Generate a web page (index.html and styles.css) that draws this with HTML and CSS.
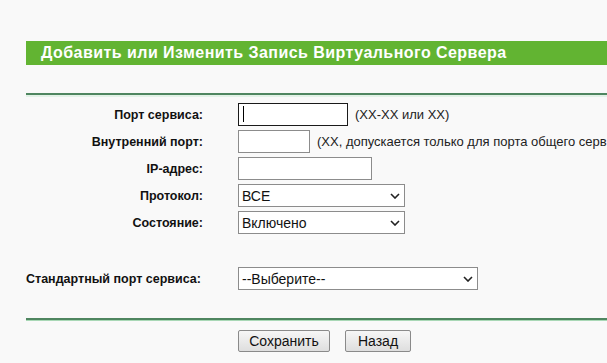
FILE: index.html
```html
<!DOCTYPE html>
<html lang="ru">
<head>
    <meta charset="UTF-8">
    <meta name="viewport" content="width=device-width, initial-scale=1.0">
    <title>Виртуальные серверы</title>
    <link rel="stylesheet" href="styles.css">
</head>
<body>
    <div class="page">
        <div class="title">Добавить или Изменить Запись Виртуального Сервера</div>
        <div class="rule"></div>

        <form class="form-grid">
            <label class="label" for="svcPort">Порт сервиса:</label>
            <div class="field">
                <span class="focus-wrap"><input type="text" id="svcPort" class="text w110 focused"></span>
                <span class="hint">(XX-XX или XX)</span>
            </div>

            <label class="label" for="inPort">Внутренний порт:</label>
            <div class="field">
                <input type="text" id="inPort" class="text w72">
                <span class="hint">(XX, допускается только для порта общего сервиса)</span>
            </div>

            <label class="label" for="ipAddr">IP-адрес:</label>
            <div class="field">
                <input type="text" id="ipAddr" class="text w134">
            </div>

            <label class="label" for="proto">Протокол:</label>
            <div class="field">
                <span class="select-wrap w167">
                    <select id="proto" class="select">
                        <option>ВСЕ</option>
                        <option>TCP</option>
                        <option>UDP</option>
                    </select>
                    <svg class="chevron" width="10" height="6" viewBox="0 0 10 6"><path d="M1 1 L5 5 L9 1" fill="none" stroke="#222" stroke-width="1.6"/></svg>
                </span>
            </div>

            <label class="label" for="state">Состояние:</label>
            <div class="field">
                <span class="select-wrap w167">
                    <select id="state" class="select">
                        <option>Включено</option>
                        <option>Выключено</option>
                    </select>
                    <svg class="chevron" width="10" height="6" viewBox="0 0 10 6"><path d="M1 1 L5 5 L9 1" fill="none" stroke="#222" stroke-width="1.6"/></svg>
                </span>
            </div>

            <label class="label label-left std" for="stdPort">Стандартный порт сервиса:</label>
            <div class="field std">
                <span class="select-wrap w240">
                    <select id="stdPort" class="select">
                        <option>--Выберите--</option>
                        <option>DNS</option>
                        <option>FTP</option>
                        <option>HTTP</option>
                    </select>
                    <svg class="chevron" width="10" height="6" viewBox="0 0 10 6"><path d="M1 1 L5 5 L9 1" fill="none" stroke="#222" stroke-width="1.6"/></svg>
                </span>
            </div>
        </form>

        <div class="rule rule-bottom"></div>

        <div class="buttons">
            <button type="button" class="btn w92">Сохранить</button>
            <button type="button" class="btn w66">Назад</button>
        </div>
    </div>
</body>
</html>
```

FILE: styles.css
```css
body {
    margin: 0;
    background-color: #f9f9f9;
    font-family: "Liberation Sans", Arial, sans-serif;
    color: #111;
    overflow: hidden;
}
.page {
    padding: 41px 0 0 26px;
}
.title {
    height: 24px;
    line-height: 24px;
    background-color: #62b432;
    color: #fff;
    font-size: 16px;
    font-weight: bold;
    letter-spacing: 0.45px;
    padding-left: 15px;
    white-space: nowrap;
}
.rule {
    margin-top: 28px;
    height: 2px;
    background-color: #4f8660;
    border-bottom: 2px solid #e3f2e7;
}
.rule-bottom {
    margin-top: 28px;
    background-color: #4f8660;
    border-bottom: 1px solid #a9d8b6;
}
.form-grid {
    display: grid;
    grid-template-columns: 177px 1fr;
    column-gap: 35px;
    row-gap: 4px;
    margin-top: 6px;
    align-items: center;
}
.label {
    text-align: right;
    font-size: 12.5px;
    font-weight: bold;
    white-space: nowrap;
}
.label-left {
    text-align: left;
}
.std {
    margin-top: 29px;
}
.field {
    display: flex;
    align-items: center;
    gap: 7px;
    white-space: nowrap;
    height: 23px;
}
.hint {
    font-size: 13px;
    color: #222;
}
.text {
    box-sizing: border-box;
    height: 23px;
    border: 1px solid #8c8c8c;
    background: #fff;
    margin: 0;
    padding: 0 4px;
    font-size: 14px;
    font-family: inherit;
    outline: none;
}
.text.focused {
    border-color: #1a1a1a;
}
.focus-wrap {
    position: relative;
    display: inline-block;
    height: 23px;
}
.focus-wrap::after {
    content: "";
    position: absolute;
    left: 5px;
    top: 3px;
    width: 1px;
    height: 16px;
    background: #000;
}
.w72 { width: 72px; }
.w110 { width: 110px; }
.w134 { width: 134px; }
.w167 { width: 167px; }
.w240 { width: 240px; }
.w92 { width: 92px; }
.w66 { width: 66px; }
.select-wrap {
    position: relative;
    display: inline-block;
    height: 23px;
}
.select {
    appearance: none;
    -webkit-appearance: none;
    box-sizing: border-box;
    width: 100%;
    height: 23px;
    margin: 0;
    border: 1px solid #8c8c8c;
    border-radius: 0;
    background: #fff;
    padding: 0 3px;
    font-size: 14px;
    font-family: inherit;
    color: #111;
    outline: none;
}
.chevron {
    position: absolute;
    right: 5px;
    top: 9px;
    pointer-events: none;
}
.buttons {
    display: flex;
    gap: 15px;
    margin: 9px 0 0 212px;
}
.btn {
    box-sizing: border-box;
    height: 22px;
    margin: 0;
    padding: 0;
    border: 1px solid #8a8a8a;
    border-radius: 2px;
    background: linear-gradient(#f6f6f6, #dedede);
    font-size: 14px;
    font-family: inherit;
    color: #111;
}
```
